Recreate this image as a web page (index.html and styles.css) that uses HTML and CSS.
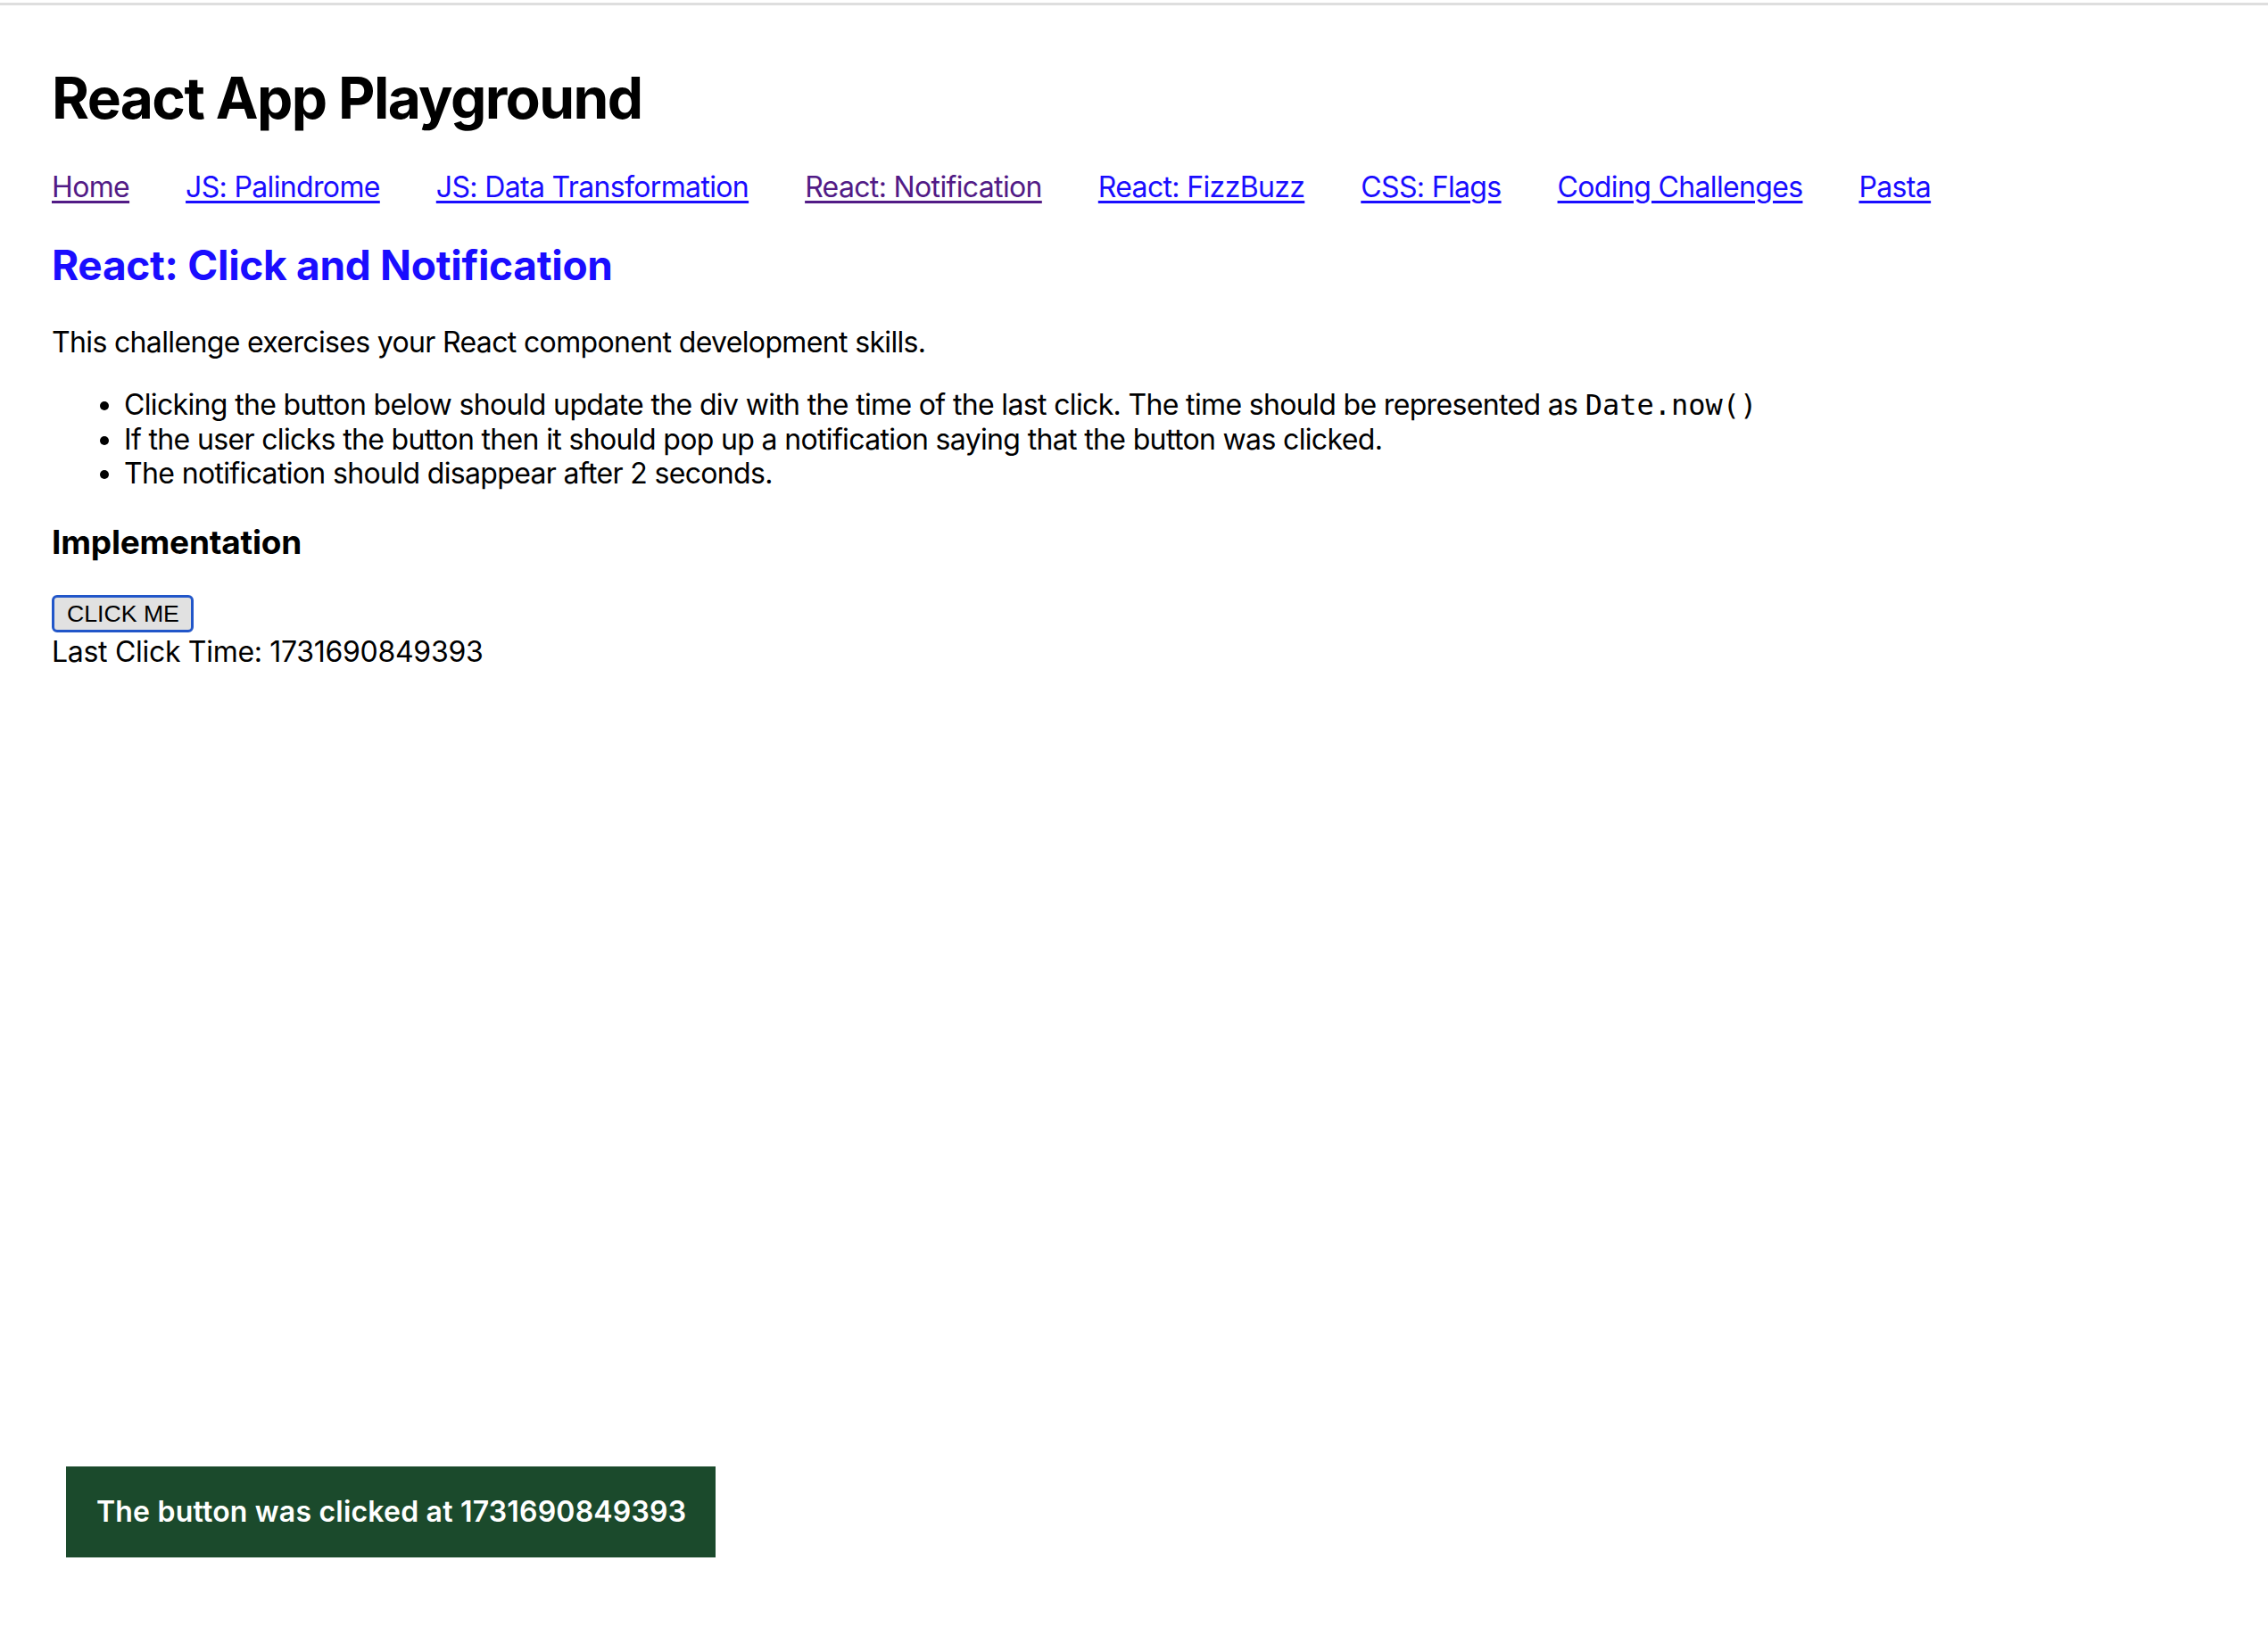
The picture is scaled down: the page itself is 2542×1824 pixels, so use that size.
FILE: index.html
```html
<!DOCTYPE html>
<html lang="en">
<head>
<meta charset="utf-8">
<title>React App Playground</title>
<link rel="stylesheet" href="styles.css">
</head>
<body>
<div class="topline"></div>
<div class="app">
  <h1 class="app-title">React App Playground</h1>
  <nav class="nav">
    <a class="nav-link visited" href="#">Home</a>
    <a class="nav-link" href="#">JS: Palindrome</a>
    <a class="nav-link" href="#">JS: Data Transformation</a>
    <a class="nav-link visited" href="#">React: Notification</a>
    <a class="nav-link" href="#">React: FizzBuzz</a>
    <a class="nav-link" href="#">CSS: Flags</a>
    <a class="nav-link" href="#">Coding Challenges</a>
    <a class="nav-link" href="#">Pasta</a>
  </nav>
  <h2 class="page-title">React: Click and Notification</h2>
  <p class="intro">This challenge exercises your React component development skills.</p>
  <ul class="reqs">
    <li>Clicking the button below should update the div with the time of the last click. The time should be represented as <code class="code">Date.now()</code></li>
    <li>If the user clicks the button then it should pop up a notification saying that the button was clicked.</li>
    <li>The notification should disappear after 2 seconds.</li>
  </ul>
  <h3 class="section-title">Implementation</h3>
  <button class="click-btn" type="button">CLICK ME</button>
  <div class="last-click">Last Click Time: 1731690849393</div>
</div>
<div class="toast">The button was clicked at 1731690849393</div>
</body>
</html>
```
FILE: styles.css
```css
html, body {
  margin: 0;
  padding: 0;
  background: #ffffff;
}
body {
  font-family: Inter, "Noto Sans", sans-serif;
  font-size: 32px;
  letter-spacing: -0.65px;
  color: #000000;
}
.topline {
  height: 3px;
  margin-top: 3px;
  background: #dedede;
}
.app {
  padding-left: 58px;
}
.app-title {
  margin: 66px 0 0 0;
  font-size: 64px;
  line-height: 76px;
  font-weight: 700;
  letter-spacing: -1.6px;
}
.nav {
  display: flex;
  gap: 63px;
  margin-top: 43px;
  line-height: 38px;
}
.nav-link {
  color: #1a0dff;
  text-decoration: underline;
  text-underline-offset: 4px;
  text-decoration-thickness: 3px;
}
.nav-link.visited {
  color: #521b86;
}
.page-title {
  margin: 40px 0 0 0;
  font-size: 46px;
  line-height: 56px;
  font-weight: 700;
  letter-spacing: -0.3px;
  color: #1a0dff;
}
.intro {
  margin: 40px 0 0 0;
  line-height: 38px;
}
.reqs {
  margin: 32px 0 0 0;
  padding-left: 81px;
  line-height: 38.5px;
}
.code {
  font-family: "DejaVu Sans Mono", "Liberation Mono", monospace;
  font-size: 32px;
  letter-spacing: 0;
  line-height: 1;
}
.section-title {
  margin: 35px 0 0 0;
  font-size: 37px;
  line-height: 44px;
  font-weight: 700;
  letter-spacing: -0.2px;
}
.click-btn {
  display: block;
  margin-top: 37px;
  height: 42px;
  box-sizing: border-box;
  padding: 0 13px 0 14px;
  border: 3px solid #2156c9;
  border-radius: 6px;
  background: #e1e1e1;
  font-family: "Liberation Sans", Arial, sans-serif;
  font-size: 26.67px;
  letter-spacing: 0;
  line-height: 34px;
  color: #000000;
}
.last-click {
  margin-top: 3px;
  line-height: 38px;
  letter-spacing: -0.3px;
}
.toast {
  position: fixed;
  left: 74px;
  bottom: 78px;
  padding: 32px 33px 32px 34px;
  background: #1b4a2c;
  color: #ffffff;
  font-size: 32px;
  font-weight: 600;
  letter-spacing: 0.2px;
  line-height: 38px;
}
```
